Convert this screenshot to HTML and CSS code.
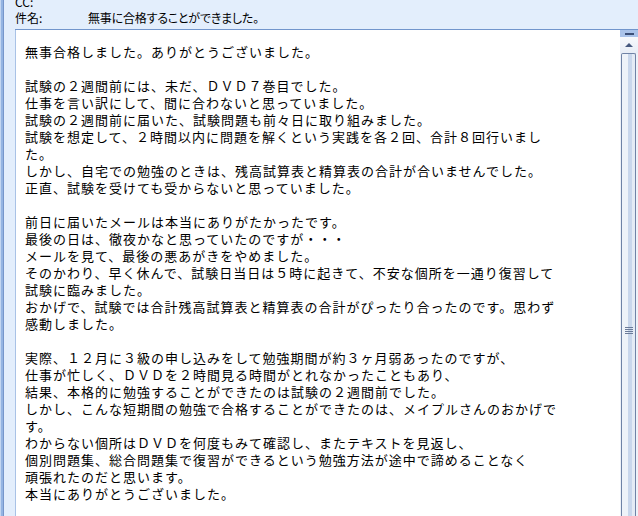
FILE: index.html
```html
<!DOCTYPE html>
<html lang="ja">
<head>
<meta charset="utf-8">
<link rel="stylesheet" href="styles.css">
</head>
<body>
<div class="window">
  <div class="edge"></div>
  <div class="main">
    <div class="headers">
      <div class="hrow cc"><span class="label">CC:</span><span class="value"></span></div>
      <div class="hrow"><span class="label">件名:</span><span class="value">無事に合格することができました。</span></div>
    </div>
    <div class="bodybox">
      <div class="text"><p>無事合格しました。ありがとうございました。</p><p>試験の２週間前には、未だ、ＤＶＤ７巻目でした。<br>仕事を言い訳にして、間に合わないと思っていました。<br>試験の２週間前に届いた、試験問題も前々日に取り組みました。<br>試験を想定して、２時間以内に問題を解くという実践を各２回、合計８回行いまし<br>た。<br>しかし、自宅での勉強のときは、残高試算表と精算表の合計が合いませんでした。<br>正直、試験を受けても受からないと思っていました。</p><p>前日に届いたメールは本当にありがたかったです。<br>最後の日は、徹夜かなと思っていたのですが・・・<br>メールを見て、最後の悪あがきをやめました。<br>そのかわり、早く休んで、試験日当日は５時に起きて、不安な個所を一通り復習して<br>試験に臨みました。<br>おかげで、試験では合計残高試算表と精算表の合計がぴったり合ったのです。思わず<br>感動しました。</p><p>実際、１２月に３級の申し込みをして勉強期間が約３ヶ月弱あったのですが、<br>仕事が忙しく、ＤＶＤを２時間見る時間がとれなかったこともあり、<br>結果、本格的に勉強することができたのは試験の２週間前でした。<br>しかし、こんな短期間の勉強で合格することができたのは、メイプルさんのおかげで<br>す。<br>わからない個所はＤＶＤを何度もみて確認し、またテキストを見返し、<br>個別問題集、総合問題集で復習ができるという勉強方法が途中で諦めることなく<br>頑張れたのだと思います。<br>本当にありがとうございました。</p></div>
      <div class="scrollbar">
        <div class="split"><span class="dash"></span></div>
        <div class="up"><span class="tri"></span></div>
        <div class="thumb">
          <div class="grip"><span></span><span></span><span></span><span></span></div>
        </div>
      </div>
    </div>
  </div>
</div>
</body>
</html>
```
FILE: styles.css
```css
html, body {
  margin: 0;
  padding: 0;
  height: 100%;
  overflow: hidden;
}
body {
  background: #e3eefc;
  font-family: "Noto Sans CJK JP", "DejaVu Sans", sans-serif;
  color: #000;
}
.window {
  display: flex;
  height: 516px;
}
.edge {
  width: 4px;
  flex: none;
  background: linear-gradient(to right, #c3d6f1 0, #c3d6f1 1px, #94b4e2 1px, #94b4e2 3px, #7696cb 3px);
}
.main {
  flex: 1;
  display: flex;
  flex-direction: column;
  padding-left: 11px;
  min-width: 0;
}
.headers {
  margin-top: -6px;
  margin-bottom: 3px;
}
.hrow {
  display: flex;
  height: 16px;
  line-height: 16px;
  font-size: 12px;
  font-feature-settings: "palt";
  color: #000;
}
.label {
  width: 73px;
  flex: none;
}
.value {
  letter-spacing: -0.2px;
}
.bodybox {
  flex: 1;
  display: flex;
  border-top: 1px solid #7195cc;
  min-height: 0;
}
.text {
  flex: 1;
  background: #fff;
  border-left: 1px solid #a9c2e6;
  padding: 13px 0 0 9px;
  font-size: 13px;
  letter-spacing: 1px;
  line-height: 17px;
  white-space: nowrap;
  overflow: hidden;
}
.text p {
  margin: 0 0 17px 0;
}
.scrollbar {
  width: 18px;
  flex: none;
  display: flex;
  flex-direction: column;
  background: #eef2f8;
}
.split {
  height: 7px;
  background: #aac3ea;
  display: flex;
  align-items: center;
  justify-content: center;
}
.dash {
  width: 9px;
  height: 2px;
  background: #3b4f78;
}
.up {
  height: 16px;
  background: linear-gradient(to bottom, #f7f9fc, #e7edf6);
  display: flex;
  align-items: center;
  justify-content: center;
}
.tri {
  width: 0;
  height: 0;
  border-left: 4px solid transparent;
  border-right: 4px solid transparent;
  border-bottom: 4px solid #45587e;
}
.thumb {
  flex: 1;
  margin: 0 2px 0 1px;
  border: 1px solid #6f83a6;
  border-bottom: none;
  border-radius: 2px 2px 0 0;
  background: linear-gradient(to right, #eef3f9 0, #eef3f9 6px, #c9d7ec 6px, #c9d7ec 10px, #e4ebf5 10px);
  display: flex;
  flex-direction: column;
  align-items: center;
  padding-top: 273px;
}
.grip {
  display: flex;
  flex-direction: column;
  gap: 1px;
}
.grip span {
  width: 8px;
  height: 1px;
  background: #6b7b99;
}
```
